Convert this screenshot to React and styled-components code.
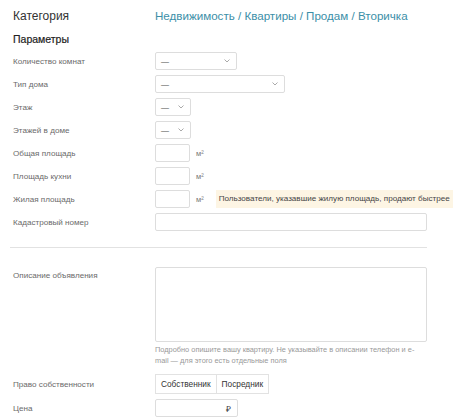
import React from 'react';
import styled, { createGlobalStyle } from 'styled-components';

const Global = createGlobalStyle`
  body {
    margin: 0;
    background: #fff;
    font-family: "Liberation Sans", Arial, sans-serif;
  }
`;

const Page = styled.div`
  width: 474px;
  height: 420px;
  overflow: hidden;
  padding: 8px 0 0 13px;
  box-sizing: border-box;
`;

const Header = styled.div`
  display: grid;
  grid-template-columns: 142px 1fr;
  align-items: center;
  line-height: 16px;
`;

const Category = styled.div`
  font-size: 12px;
  color: #333;
`;

const Crumbs = styled.div`
  font-size: 11.6px;
  color: #3c8fa8;
`;

const Section = styled.div`
  font-size: 10.5px;
  color: #222;
  -webkit-text-stroke: 0.2px #222;
  margin-top: 7px;
  height: 16px;
  line-height: 16px;
`;

const Rows = styled.div`
  display: flex;
  flex-direction: column;
  gap: 5px;
  margin-top: ${p => p.$top || 0}px;
`;

const Row = styled.div`
  display: grid;
  grid-template-columns: 142px 1fr;
  align-items: ${p => (p.$top ? 'start' : 'center')};
  min-height: 18px;
`;

const Label = styled.div`
  font-size: 8.1px;
  color: #6a6a6a;
  padding-top: ${p => (p.$pad ? 4 : 0)}px;
`;

const Controls = styled.div`
  display: flex;
  align-items: center;
  gap: 6px;
`;

const Select = styled.div`
  width: ${p => p.$w}px;
  height: 18px;
  box-sizing: border-box;
  border: 1px solid #ddd;
  border-radius: 2px;
  display: flex;
  align-items: center;
  justify-content: space-between;
  padding: 0 6px 0 5px;
  font-size: 8px;
  color: #444;
`;

const Chevron = () => (
  <svg width="6" height="4" viewBox="0 0 6 4">
    <path d="M0.5 0.5 L3 3 L5.5 0.5" fill="none" stroke="#aaa" strokeWidth="1" />
  </svg>
);

const Input = styled.div`
  width: ${p => p.$w}px;
  height: ${p => p.$h || 18}px;
  box-sizing: border-box;
  border: 1px solid #ddd;
  border-radius: 2px;
  display: flex;
  align-items: center;
  justify-content: flex-end;
  padding-right: 6px;
  font-size: 8.5px;
  color: #333;
`;

const Unit = styled.span`
  font-size: 7.5px;
  color: #777;
`;

const Hint = styled.div`
  margin-left: 6px;
  height: 18px;
  line-height: 18px;
  padding: 0 3px;
  background: #fdf5e4;
  font-size: 8.1px;
  color: #444;
  white-space: nowrap;
`;

const Divider = styled.div`
  width: 417px;
  margin-left: -3px;
  border-top: 1px solid #e2e2e2;
  margin-top: 16px;
`;

const Help = styled.div`
  width: 266px;
  margin: 2px 0 3px;
  font-size: 7.4px;
  line-height: 11px;
  color: #999;
`;

const Toggle = styled.div`
  display: flex;
`;

const ToggleBtn = styled.div`
  height: 20px;
  padding: 0 5px;
  box-sizing: border-box;
  border: 1px solid #e2e2e2;
  margin-left: ${p => (p.$first ? 0 : -1)}px;
  display: flex;
  align-items: center;
  font-size: 8.3px;
  color: #333;
`;

const Stack = styled.div``;

export default function App() {
  return (
    <Page>
      <Global />
      <Header>
        <Category>Категория</Category>
        <Crumbs>Недвижимость / Квартиры / Продам / Вторичка</Crumbs>
      </Header>
      <Section>Параметры</Section>
      <Rows $top={5}>
        <Row>
          <Label>Количество комнат</Label>
          <Controls><Select $w={82}>—<Chevron /></Select></Controls>
        </Row>
        <Row>
          <Label>Тип дома</Label>
          <Controls><Select $w={130}>—<Chevron /></Select></Controls>
        </Row>
        <Row>
          <Label>Этаж</Label>
          <Controls><Select $w={36}>—<Chevron /></Select></Controls>
        </Row>
        <Row>
          <Label>Этажей в доме</Label>
          <Controls><Select $w={36}>—<Chevron /></Select></Controls>
        </Row>
        <Row>
          <Label>Общая площадь</Label>
          <Controls><Input $w={35} /><Unit>м²</Unit></Controls>
        </Row>
        <Row>
          <Label>Площадь кухни</Label>
          <Controls><Input $w={35} /><Unit>м²</Unit></Controls>
        </Row>
        <Row>
          <Label>Жилая площадь</Label>
          <Controls>
            <Input $w={35} /><Unit>м²</Unit>
            <Hint>Пользователи, указавшие жилую площадь, продают быстрее</Hint>
          </Controls>
        </Row>
        <Row>
          <Label>Кадастровый номер</Label>
          <Controls><Input $w={272} /></Controls>
        </Row>
      </Rows>
      <Divider />
      <Rows $top={19}>
        <Row $top>
          <Label $pad>Описание объявления</Label>
          <Stack>
            <Input $w={272} $h={75} />
            <Help>
              Подробно опишите вашу квартиру. Не указывайте в описании телефон и e-mail — для этого есть отдельные поля
            </Help>
          </Stack>
        </Row>
        <Row>
          <Label>Право собственности</Label>
          <Toggle>
            <ToggleBtn $first>Собственник</ToggleBtn>
            <ToggleBtn>Посредник</ToggleBtn>
          </Toggle>
        </Row>
        <Row>
          <Label>Цена</Label>
          <Controls><Input $w={83}>₽</Input></Controls>
        </Row>
      </Rows>
    </Page>
  );
}
